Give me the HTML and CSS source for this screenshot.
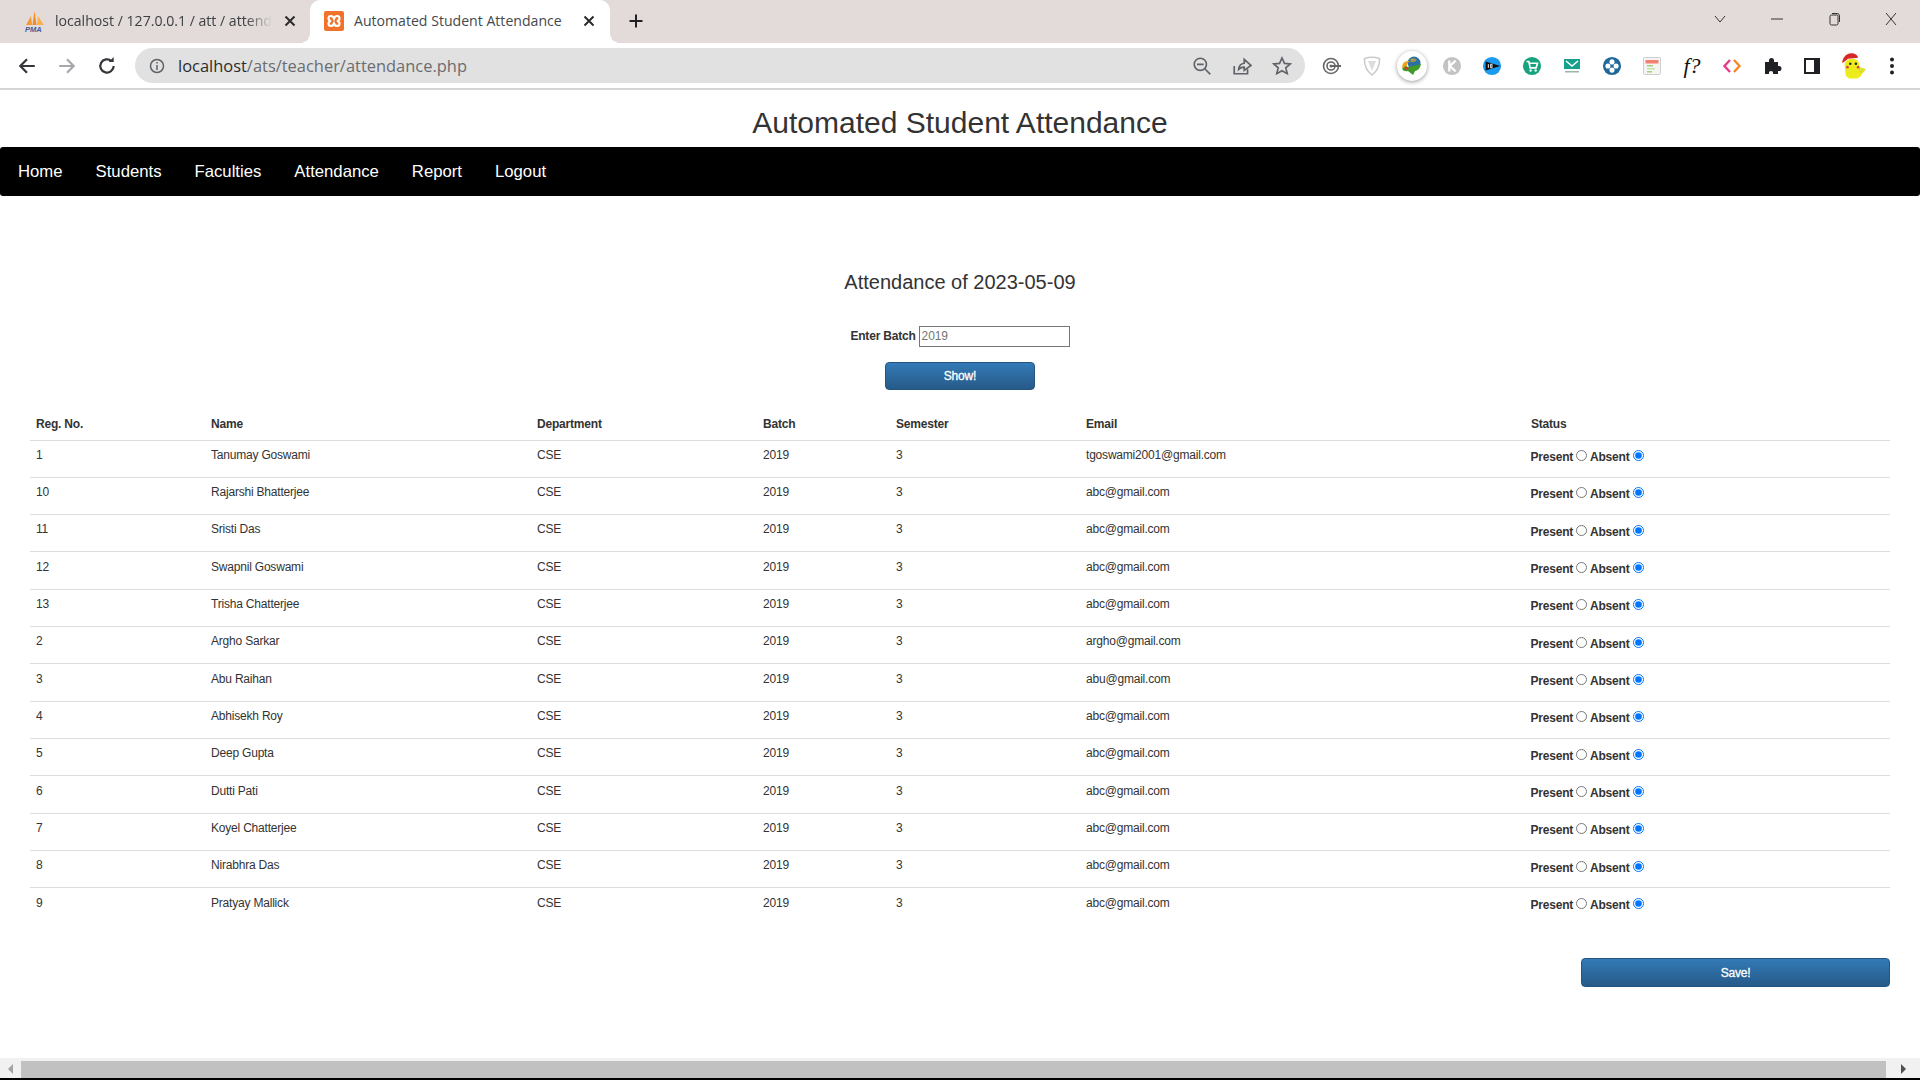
FILE: index.html
```html
<!DOCTYPE html>
<html lang="en">
<head>
    <meta charset="UTF-8">
    <title>Automated Student Attendance</title>
    <link rel="stylesheet" href="styles.css">
</head>
<body>
    <div class="tabbar">
        <div class="tab">
            <svg class="favicon" viewBox="0 0 22 22">
                <path d="M2 15 Q5 10 7 6 L8 15 Z" fill="#f29a2e"/>
                <path d="M8.500 15 L10.500 1 L12.500 15 Z" fill="#f58a1f"/>
                <path d="M13 15 L14 6 Q17 11 20 15 Z" fill="#f7b04a"/>
                <text x="1" y="21.500" class="pma">PMA</text>
            </svg>
            <span class="tab-title tab-title-faded">localhost / 127.0.0.1 / att / attend</span>
            <svg class="tab-close" viewBox="0 0 12 12"><path d="M1.500 1.500 L10.500 10.500 M10.500 1.500 L1.500 10.500"/></svg>
        </div>
        <div class="tab tab-active">
            <svg class="favicon" viewBox="0 0 20 20">
                <rect width="20" height="20" rx="2" fill="#f0722b"/>
                <path d="M7 5 Q4.500 5 4.500 7.500 Q4.500 9.500 7 10 Q4.500 10.500 4.500 12.500 Q4.500 15 7 15 Q9 15 10 12.500 Q11 15 13 15 Q15.500 15 15.500 12.500 Q15.500 10.500 13 10 Q15.500 9.500 15.500 7.500 Q15.500 5 13 5 Q11 5 10 7.500 Q9 5 7 5 Z" fill="none" stroke="#fff" stroke-width="2.200"/>
            </svg>
            <span class="tab-title">Automated Student Attendance</span>
            <svg class="tab-close" viewBox="0 0 12 12"><path d="M1.500 1.500 L10.500 10.500 M10.500 1.500 L1.500 10.500"/></svg>
        </div>
        <svg class="new-tab" viewBox="0 0 16 16"><path d="M8 1.500 V14.500 M1.500 8 H14.500"/></svg>
        <div class="window-controls">
            <svg viewBox="0 0 14 14"><path d="M2 4 L7 10 L12 4"/></svg>
            <svg viewBox="0 0 14 14"><path d="M1 7 H13"/></svg>
            <svg viewBox="0 0 14 14"><rect x="3" y="3" width="8" height="10" rx="1.500"/><path d="M5 1.500 H10 Q12.500 1.500 12.500 4 V10"/></svg>
            <svg viewBox="0 0 14 14"><path d="M2 1 L12 13 M12 1 L2 13"/></svg>
        </div>
    </div>

    <div class="toolbar">
        <span class="tool"><svg viewBox="0 0 18 18" class="line dark"><path d="M16 9 H3 M9 3 L3 9 L9 15"/></svg></span>
        <span class="tool"><svg viewBox="0 0 18 18" class="line faint"><path d="M2 9 H15 M9 3 L15 9 L9 15"/></svg></span>
        <span class="tool"><svg viewBox="0 0 18 18" class="line dark"><path d="M15 9 A6 6 0 1 1 13 4.500"/><path d="M10.500 5.500 H15 V1" class="fill-dark"/></svg></span>
        <div class="omnibox">
            <svg class="info-icon" viewBox="0 0 16 16"><circle cx="8" cy="8" r="6.500"/><path d="M8 7 V12 M8 4 V5.500"/></svg>
            <span class="url"><span class="url-host">localhost</span>/ats/teacher/attendance.php</span>
            <span class="tool"><svg viewBox="0 0 18 18" class="line grey"><circle cx="7.500" cy="7.500" r="5.500"/><path d="M4.500 7.500 H10.500 M11.500 11.500 L16.500 16.500"/></svg></span>
            <span class="tool"><svg viewBox="0 0 18 18" class="line grey"><path d="M2 9 V16 H14 V12"/><path d="M6 12 Q6.500 7 11 6.500 V3 L17 8.500 L11 13 V10 Q8 10 6 12 Z"/></svg></span>
            <span class="tool"><svg viewBox="0 0 18 18" class="line grey"><path d="M9 1.800 L11.200 6.700 L16.400 7.200 L12.400 10.700 L13.700 15.900 L9 13.200 L4.300 15.900 L5.600 10.700 L1.600 7.200 L6.800 6.700 Z"/></svg></span>
        </div>
        <div class="extensions">
            <span class="tool"><svg viewBox="0 0 20 20"><g fill="none" stroke="#666" stroke-width="1.600"><circle cx="9" cy="10" r="7.500"/><circle cx="9" cy="10" r="4"/></g><path d="M9 10 H19" stroke="#666" stroke-width="2"/><circle cx="9" cy="10" r="1.500" fill="#666"/></svg></span>
            <span class="tool"><svg viewBox="0 0 20 20"><path d="M2.500 2.500 Q10 0 17.500 2.500 Q18 13 10 19 Q2 13 2.500 2.500 Z" fill="#fff" stroke="#c9c9c9" stroke-width="1.500"/><path d="M6 5 H14 L10 15 Z" fill="#ddd"/></svg></span>
            <span class="tool tool-idm"><svg viewBox="0 0 24 24"><circle cx="14" cy="9" r="6.500" fill="#2b6ea8"/><path d="M10 5 Q14 3 17 6 Q14 9 11 8 Z" fill="#9c9a4a"/><path d="M2 14 Q2 6 10 7 Q6 9 7 13 Z" fill="#e8a41c"/><path d="M2 15 Q5 11 8 13 L21 10 Q20 16 15 17 L13 21 L8 17 Q4 18 2 15 Z" fill="#3f9a2a"/><path d="M4 14 Q7 12 9 14 L6 16 Z" fill="#d9382c"/></svg></span>
            <span class="tool"><svg viewBox="0 0 22 22"><circle cx="11" cy="11" r="10" fill="#c3c3c3"/><path d="M8 5 V17 M15 5 L8.500 11 L15 17" fill="none" stroke="#fff" stroke-width="2.500"/></svg></span>
            <span class="tool"><svg viewBox="0 0 22 22"><circle cx="11" cy="11" r="10" fill="#1c9af0"/><path d="M4 6 L20 11 L4 16 Z" fill="#111"/><path d="M7 9 V13 M9.500 9 H11 V13 H9.500 Z" fill="none" stroke="#fff" stroke-width="1"/></svg></span>
            <span class="tool"><svg viewBox="0 0 22 22"><circle cx="11" cy="11" r="10" fill="#17a37e"/><path d="M5 6 H7.500 L9 13 H15.500 L17 8 H8" fill="none" stroke="#fff" stroke-width="1.800"/><circle cx="9.500" cy="16" r="1.300" fill="#fff"/><circle cx="15" cy="16" r="1.300" fill="#fff"/></svg></span>
            <span class="tool"><svg viewBox="0 0 20 20"><rect x="2" y="3" width="16" height="10" fill="#17a08c"/><path d="M4 5 L10 10 L16 5" fill="none" stroke="#fff" stroke-width="1.500"/><rect x="3" y="15" width="14" height="1.500" fill="#9ab4b0"/></svg></span>
            <span class="tool"><svg viewBox="0 0 22 22"><circle cx="11" cy="11" r="10" fill="#21689a"/><circle cx="11" cy="6.500" r="2.800" fill="#fff"/><circle cx="11" cy="15.500" r="2.800" fill="#fff"/><circle cx="6.500" cy="11" r="2.800" fill="#fff"/><circle cx="15.500" cy="11" r="2.800" fill="#fff"/></svg></span>
            <span class="tool"><svg viewBox="0 0 20 20"><rect x="1.500" y="1.500" width="17" height="17" rx="1" fill="#f4f4f4" stroke="#cfcfcf"/><rect x="3.500" y="4" width="13" height="3.500" fill="#f47f72"/><rect x="5" y="9" width="6" height="1.500" fill="#9fd47f"/><rect x="5" y="12" width="8" height="1.500" fill="#c5e3a8"/><rect x="5" y="15" width="5" height="1.500" fill="#9fd47f"/></svg></span>
            <span class="tool"><span class="font-finder">f?</span></span>
            <span class="tool"><svg viewBox="0 0 20 20" fill="none" stroke-width="2.400"><path d="M8 4 L2.500 10 L8 16" stroke="#ea3a8c"/><path d="M12 4 L17.500 10 L12 16" stroke="#f6862a"/></svg></span>
            <span class="tool"><svg viewBox="0 0 20 20"><path d="M3 6 H7 Q6.500 2 9.500 2 Q12.500 2 12 6 H16 V10 Q19.500 9.500 19.500 12.500 Q19.500 15.500 16 15 V18 H11 Q11.500 15 9 15 Q6.500 15 7 18 H3 Z" fill="#202124"/></svg></span>
            <span class="tool"><svg viewBox="0 0 20 20"><rect x="2" y="2" width="16" height="16" fill="#202124"/><rect x="4" y="4" width="8" height="12" fill="#fff"/></svg></span>
            <span class="tool"><svg viewBox="0 0 24 24" class="pikachu"><path d="M5 12 Q5 6 12 6 Q18 6 18 12 L20 21 L16 23.500 H9 L6 21 Z" fill="#ecec1c"/><path d="M17 13 L24 15 L20 20 L18 18 Z" fill="#dfe02a"/><path d="M3 8 Q5 1 11 1 Q16 1 17 5 L8 6 L3 10 Z" fill="#d6282a"/><circle cx="10" cy="10.500" r="1.100" fill="#222"/><circle cx="15" cy="10.500" r="1.100" fill="#222"/><circle cx="7.500" cy="13.500" r="1.200" fill="#e0483a"/><circle cx="17" cy="13.500" r="1.200" fill="#e0483a"/></svg></span>
            <span class="tool"><svg viewBox="0 0 20 20"><circle cx="10" cy="3.500" r="2" fill="#202124"/><circle cx="10" cy="10" r="2" fill="#202124"/><circle cx="10" cy="16.500" r="2" fill="#202124"/></svg></span>
        </div>
    </div>

    <div class="page">
        <header class="site-title">
            <h1>Automated Student Attendance</h1>
        </header>

        <nav class="site-nav">
            <a href="#">Home</a>
            <a href="#">Students</a>
            <a href="#">Faculties</a>
            <a href="#">Attendance</a>
            <a href="#">Report</a>
            <a href="#">Logout</a>
        </nav>

        <main class="content">
            <h2>Attendance of 2023-05-09</h2>

            <form class="batch-form">
                <div class="batch-field">
                    <label for="batch">Enter Batch</label>
                    <input type="text" id="batch" placeholder="2019">
                </div>
                <button type="button" class="btn btn-show">Show!</button>
            </form>

            <table class="attendance">
                <thead>
                    <tr>
                        <th class="col-reg">Reg. No.</th>
                        <th class="col-name">Name</th>
                        <th class="col-dept">Department</th>
                        <th class="col-batch">Batch</th>
                        <th class="col-sem">Semester</th>
                        <th class="col-email">Email</th>
                        <th>Status</th>
                    </tr>
                </thead>
                <tbody>
                    <tr><td>1</td><td>Tanumay Goswami</td><td>CSE</td><td>2019</td><td>3</td><td>tgoswami2001@gmail.com</td><td class="status"><label>Present</label> <input type="radio" name="s1"> <label>Absent</label> <input type="radio" name="s1" checked></td></tr>
                    <tr><td>10</td><td>Rajarshi Bhatterjee</td><td>CSE</td><td>2019</td><td>3</td><td>abc@gmail.com</td><td class="status"><label>Present</label> <input type="radio" name="s10"> <label>Absent</label> <input type="radio" name="s10" checked></td></tr>
                    <tr><td>11</td><td>Sristi Das</td><td>CSE</td><td>2019</td><td>3</td><td>abc@gmail.com</td><td class="status"><label>Present</label> <input type="radio" name="s11"> <label>Absent</label> <input type="radio" name="s11" checked></td></tr>
                    <tr><td>12</td><td>Swapnil Goswami</td><td>CSE</td><td>2019</td><td>3</td><td>abc@gmail.com</td><td class="status"><label>Present</label> <input type="radio" name="s12"> <label>Absent</label> <input type="radio" name="s12" checked></td></tr>
                    <tr><td>13</td><td>Trisha Chatterjee</td><td>CSE</td><td>2019</td><td>3</td><td>abc@gmail.com</td><td class="status"><label>Present</label> <input type="radio" name="s13"> <label>Absent</label> <input type="radio" name="s13" checked></td></tr>
                    <tr><td>2</td><td>Argho Sarkar</td><td>CSE</td><td>2019</td><td>3</td><td>argho@gmail.com</td><td class="status"><label>Present</label> <input type="radio" name="s2"> <label>Absent</label> <input type="radio" name="s2" checked></td></tr>
                    <tr><td>3</td><td>Abu Raihan</td><td>CSE</td><td>2019</td><td>3</td><td>abu@gmail.com</td><td class="status"><label>Present</label> <input type="radio" name="s3"> <label>Absent</label> <input type="radio" name="s3" checked></td></tr>
                    <tr><td>4</td><td>Abhisekh Roy</td><td>CSE</td><td>2019</td><td>3</td><td>abc@gmail.com</td><td class="status"><label>Present</label> <input type="radio" name="s4"> <label>Absent</label> <input type="radio" name="s4" checked></td></tr>
                    <tr><td>5</td><td>Deep Gupta</td><td>CSE</td><td>2019</td><td>3</td><td>abc@gmail.com</td><td class="status"><label>Present</label> <input type="radio" name="s5"> <label>Absent</label> <input type="radio" name="s5" checked></td></tr>
                    <tr><td>6</td><td>Dutti Pati</td><td>CSE</td><td>2019</td><td>3</td><td>abc@gmail.com</td><td class="status"><label>Present</label> <input type="radio" name="s6"> <label>Absent</label> <input type="radio" name="s6" checked></td></tr>
                    <tr><td>7</td><td>Koyel Chatterjee</td><td>CSE</td><td>2019</td><td>3</td><td>abc@gmail.com</td><td class="status"><label>Present</label> <input type="radio" name="s7"> <label>Absent</label> <input type="radio" name="s7" checked></td></tr>
                    <tr><td>8</td><td>Nirabhra Das</td><td>CSE</td><td>2019</td><td>3</td><td>abc@gmail.com</td><td class="status"><label>Present</label> <input type="radio" name="s8"> <label>Absent</label> <input type="radio" name="s8" checked></td></tr>
                    <tr><td>9</td><td>Pratyay Mallick</td><td>CSE</td><td>2019</td><td>3</td><td>abc@gmail.com</td><td class="status"><label>Present</label> <input type="radio" name="s9"> <label>Absent</label> <input type="radio" name="s9" checked></td></tr>
                </tbody>
            </table>

            <div class="save-row">
                <button type="button" class="btn btn-save">Save!</button>
            </div>
        </main>

        <div class="scrollbar">
            <span class="arrow arrow-left"></span>
            <span class="thumb"></span>
            <span class="arrow arrow-right"></span>
        </div>
        <div class="taskbar-edge"></div>
    </div>
</body>
</html>
```

FILE: styles.css
```css
* {
    box-sizing: border-box;
}

html, body {
    height: 100%;
}

body {
    margin: 0;
    display: flex;
    flex-direction: column;
    overflow: hidden;
    background-color: #fff;
    color: #333;
    font-family: "Liberation Sans", Arial, sans-serif;
    font-size: 12px;
}

/* browser tabs */
.tabbar {
    height: 43px;
    flex: none;
    display: flex;
    align-items: center;
    background-color: #e2dbd9;
    font-family: "Open Sans", sans-serif;
}

.tab {
    width: 310px;
    height: 100%;
    display: flex;
    align-items: center;
    padding: 0 14px 2px 24px;
    color: #3c4043;
    font-size: 14.100px;
}

.tab-active {
    position: relative;
    width: 300px;
    padding: 0 15px 2px 14px;
    background-color: #fff;
    border-radius: 10px 10px 0 0;
    color: #45494d;
}

/* the small flares at the bottom corners of the active tab */
.tab-active::before,
.tab-active::after {
    content: "";
    position: absolute;
    bottom: 0;
    width: 10px;
    height: 10px;
}

.tab-active::before {
    left: -10px;
    background-image: radial-gradient(circle at 0 0, transparent 10px, #fff 10px);
}

.tab-active::after {
    right: -10px;
    background-image: radial-gradient(circle at 100% 0, transparent 10px, #fff 10px);
}

.favicon {
    width: 22px;
    height: 22px;
    flex: none;
}

.tab-active .favicon {
    width: 20px;
    height: 20px;
}

.pma {
    font-family: "Liberation Sans", sans-serif;
    font-size: 7.500px;
    font-weight: bold;
    font-style: italic;
    fill: #4a5a94;
}

.tab-title {
    flex: 1;
    margin-left: 9px;
    white-space: nowrap;
    overflow: hidden;
}

.tab-active .tab-title {
    margin-left: 10px;
}

.tab-title-faded {
    -webkit-mask-image: linear-gradient(to right, #000 88%, transparent 100%);
    mask-image: linear-gradient(to right, #000 88%, transparent 100%);
}

.tab-close {
    width: 12px;
    height: 12px;
    flex: none;
    margin-left: 12px;
    fill: none;
    stroke: #2b2b2b;
    stroke-width: 2;
}

.new-tab {
    width: 16px;
    height: 16px;
    margin: 0 0 2px 18px;
    fill: none;
    stroke: #202124;
    stroke-width: 2;
}

.window-controls {
    margin-left: auto;
    display: flex;
    gap: 43px;
    padding: 0 22px 6px 0;
}

.window-controls svg {
    width: 14px;
    height: 14px;
    fill: none;
    stroke: #333;
    stroke-width: 1;
}

/* browser toolbar */
.toolbar {
    height: 47px;
    flex: none;
    display: flex;
    align-items: center;
    padding: 0 8px 0 7px;
    border-bottom: 2px solid #d4d4d4;
    background-color: #fff;
}

.tool {
    width: 40px;
    height: 32px;
    flex: none;
    display: flex;
    align-items: center;
    justify-content: center;
}

.tool svg {
    width: 20px;
    height: 20px;
}

.line {
    fill: none;
    stroke-width: 2;
}

.line.grey {
    stroke: #5f6368;
    stroke-width: 1.500;
}

.line.dark {
    stroke: #35363a;
}

.line.faint {
    stroke: #a6a8ab;
}

.fill-dark {
    fill: #35363a;
    stroke: none;
}

.omnibox {
    width: 1170px;
    height: 35px;
    flex: none;
    margin: 0 7px 0 8px;
    display: flex;
    align-items: center;
    padding: 0 3px 0 14px;
    background-color: #e1e1e1;
    border-radius: 18px;
}

.info-icon {
    width: 16px;
    height: 16px;
    flex: none;
    fill: none;
    stroke: #5f6368;
    stroke-width: 1.500;
}

.url {
    flex: 1;
    margin-left: 13px;
    font-family: "Open Sans", sans-serif;
    font-size: 16.450px;
    color: #6a6c70;
}

.url-host {
    color: #2b2c2e;
}

.extensions {
    display: flex;
}

.tool-idm svg {
    width: 30px;
    height: 30px;
    padding: 3px;
    background-color: #fff;
    border-radius: 50%;
    box-shadow: 0 1px 4px rgba(0, 0, 0, 0.4);
}

.font-finder {
    font-family: "Liberation Serif", serif;
    font-style: italic;
    font-size: 22px;
    color: #111;
}

.tool .pikachu {
    width: 27px;
    height: 27px;
}

/* page */
.page {
    flex: 1;
    min-height: 0;
    display: flex;
    flex-direction: column;
}

.site-title {
    height: 57px;
    flex: none;
    display: flex;
    align-items: center;
    justify-content: center;
    padding-top: 8px;
}

.site-title h1 {
    margin: 0;
    font-size: 30px;
    font-weight: normal;
}

.site-nav {
    height: 49px;
    flex: none;
    display: flex;
    align-items: center;
    gap: 33px;
    padding-left: 18px;
    background-color: #000;
    border-radius: 3px;
}

.site-nav a {
    color: #fff;
    font-size: 16.720px;
    text-decoration: none;
}

.content {
    flex: 1;
    min-height: 0;
    padding: 0 30px;
}

.content h2 {
    margin: 73px 0 0;
    font-size: 20px;
    line-height: 26px;
    font-weight: normal;
    text-align: center;
}

.batch-form {
    margin-top: 31px;
    display: flex;
    flex-direction: column;
    align-items: center;
}

.batch-field {
    display: flex;
    align-items: center;
    gap: 3px;
}

.batch-field label {
    margin-bottom: 2px;
    font-weight: bold;
    letter-spacing: -0.200px;
}

.batch-field input {
    width: 151px;
    height: 21px;
    padding: 0 2px 2px;
    border: 1px solid #767676;
    font-family: "Liberation Sans", sans-serif;
    font-size: 12px;
    letter-spacing: -0.100px;
}

.batch-field input::placeholder {
    color: #757575;
}

.btn {
    display: block;
    height: 29px;
    border: 1px solid #245580;
    border-radius: 4px;
    background-image: linear-gradient(to bottom, #337ab7, #265a88);
    color: #fff;
    font-family: "Liberation Sans", sans-serif;
    font-size: 12px;
    letter-spacing: -0.200px;
    -webkit-text-stroke: 0.300px #fff;
}

.btn-show {
    width: 150px;
    height: 28px;
    margin-top: 15px;
    padding-bottom: 1px;
}

.btn-save {
    width: 309px;
}

.attendance {
    width: 100%;
    margin-top: 15px;
    border-collapse: collapse;
    table-layout: fixed;
    letter-spacing: -0.200px;
}

.attendance th {
    height: 35px;
    padding: 3px 6px 0;
    vertical-align: middle;
    text-align: left;
    font-weight: bold;
}

.attendance tbody tr {
    height: 37.330px;
}

.attendance td {
    padding: 6.200px 6px 0;
    vertical-align: top;
    border-top: 1px solid #ddd;
    line-height: 17px;
}

.attendance td.status {
    padding-top: 8.600px;
    padding-left: 5.500px;
    font-weight: bold;
}

.status input {
    width: 11px;
    height: 11px;
    margin: 0;
    vertical-align: 0;
}

.col-reg { width: 175px; }
.col-name { width: 326px; }
.col-dept { width: 226px; }
.col-batch { width: 133px; }
.col-sem { width: 190px; }
.col-email { width: 445px; }

.save-row {
    display: flex;
    justify-content: flex-end;
    margin-top: 33px;
}

/* window scrollbar */
.scrollbar {
    height: 20px;
    flex: none;
    display: flex;
    align-items: center;
    padding-top: 2px;
    background-color: #f1f1f1;
}

.thumb {
    flex: 1;
    height: 17px;
    background-color: #c1c1c1;
}

.arrow {
    width: 21px;
    height: 17px;
    flex: none;
    display: flex;
    align-items: center;
    justify-content: center;
}

.arrow::before {
    content: "";
    border-style: solid;
    border-color: transparent;
    border-width: 5px 0 5px 5px;
}

.arrow-left {
    transform: scaleX(-1);
}

.arrow-left::before {
    border-left-color: #a3a3a3;
}

.arrow-right {
    width: 34px;
}

.arrow-right::before {
    border-left-color: #505050;
}

.taskbar-edge {
    height: 2px;
    flex: none;
    background-color: #000;
}
```
